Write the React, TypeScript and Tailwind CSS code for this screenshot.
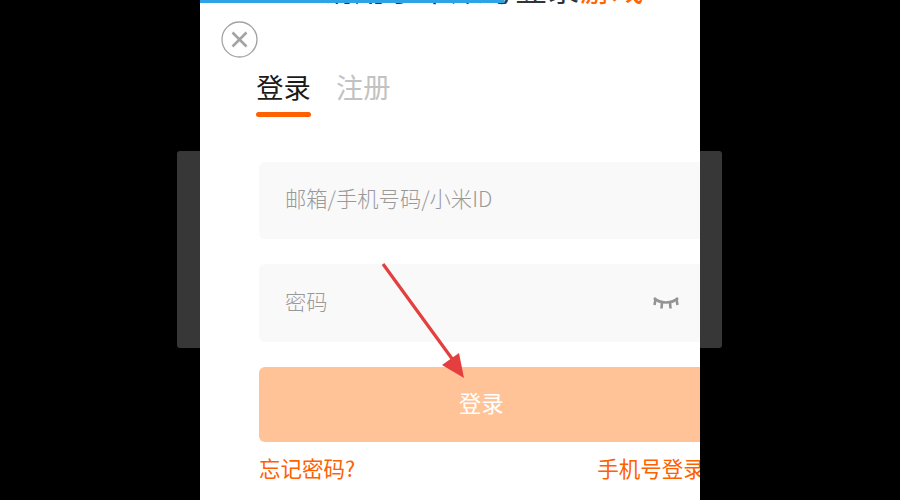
const cjk = "font-['Noto_Sans_CJK_SC','Noto_Sans',sans-serif]";

function CloseIcon() {
  return (
    <svg width="37" height="37" viewBox="0 0 37 37" fill="none" stroke="#a3a3a3">
      <circle cx="18.500" cy="18.500" r="17.500" strokeWidth="1.300" />
      <path d="M11.500 11.500l14 14M25.500 11.500l-14 14" strokeWidth="2.600" />
    </svg>
  );
}

function EyeClosedIcon() {
  return (
    <svg width="26" height="14" viewBox="0 0 26 14" fill="none" stroke="#949494" strokeWidth="2.600">
      <path d="M1 2c3 3 7 4.500 12 4.500S22 5 25 2" />
      <path d="M2.500 3.500L1.500 9M9 6.500l-.5 6M17 6.500l.5 6M23.500 3.500l1 5.500" />
    </svg>
  );
}

function Arrow() {
  return (
    <svg className="absolute left-[375px] top-[257px]" width="100" height="125" viewBox="0 0 100 125" fill="none">
      <path d="M8 7L78 103" stroke="#e53e3e" strokeWidth="3.200" />
      <path d="M89 121L67 108L84 96Z" fill="#e53e3e" />
    </svg>
  );
}

export default function App() {
  return (
    <div className={`relative h-[500px] w-[900px] overflow-hidden bg-black ${cjk}`}>
      {/* panel behind the dialog */}
      <div className="absolute left-[177px] top-[151px] h-[197px] w-[545px] rounded-[3px] bg-[#373737]" />

      <div className="relative h-full w-[500px] ml-[200px] overflow-hidden bg-white">
        <div className="absolute left-[122px] top-[-33px] whitespace-nowrap text-[32.200px] leading-[40px] text-[#333333]">
          请用小米账号登录<span className="text-[#ff6700]">游戏</span>
        </div>
        <div className="absolute left-0 top-0 h-[3px] w-[305px] rounded-r-full bg-[#2ea3e6]" />

        <div className="w-[560px] pl-[21px] pt-[21px]">
          <CloseIcon />

          <div className="mt-[10px] ml-[35px] flex gap-[25px] text-[27.300px] leading-[36px]">
            <div className="flex w-[55px] flex-col items-center">
              <span className="whitespace-nowrap text-[#1a1a1a]">登录</span>
              <div className="mt-[8px] h-[5px] w-[55px] rounded-full bg-[#ff6000]" />
            </div>
            <span className="text-[#c2c2c2]">注册</span>
          </div>

          <div className="ml-[38px] mt-[45px] flex w-[500px] flex-col">
            <div className="flex h-[77px] items-center rounded-[6px] bg-[#f9f9f9] pb-[6px] pl-[26px] text-[21.300px] font-light text-[#999999]">
              邮箱/手机号码/小米ID
            </div>
            <div className="mt-[25px] flex h-[78px] items-center rounded-[6px] bg-[#f9f9f9] pb-[5px] pl-[26px] text-[21.300px] font-light text-[#999999]">
              <span>密码</span>
              <div className="ml-[325px] mt-[5px]">
                <EyeClosedIcon />
              </div>
            </div>
            <div className="mt-[25px] flex h-[75px] items-center rounded-[6px] bg-[#ffc397] pb-[4px] pl-[200px] text-[22.300px] text-white">
              登录
            </div>
            <div className="mt-[11px] flex text-[21.500px] leading-[30px] text-[#ff6000]">
              <span>忘记密码?</span>
              <span className="ml-[242px] whitespace-nowrap">手机号登录</span>
            </div>
          </div>
        </div>
      </div>

      <Arrow />
    </div>
  );
}
